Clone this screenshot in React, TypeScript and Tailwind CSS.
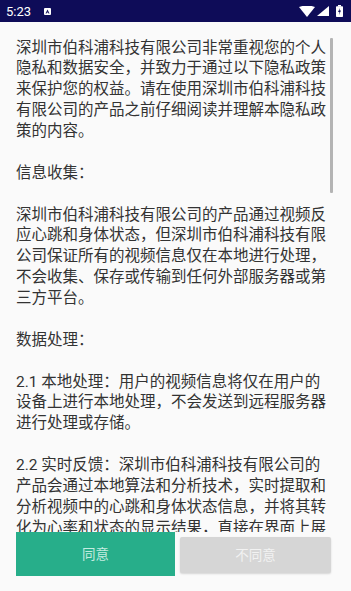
import React from "react";

const text = `深圳市伯科浦科技有限公司非常重视您的个人隐私和数据安全，并致力于通过以下隐私政策来保护您的权益。请在使用深圳市伯科浦科技有限公司的产品之前仔细阅读并理解本隐私政策的内容。

信息收集：

深圳市伯科浦科技有限公司的产品通过视频反应心跳和身体状态，但深圳市伯科浦科技有限公司保证所有的视频信息仅在本地进行处理，不会收集、保存或传输到任何外部服务器或第三方平台。

数据处理：

2.1 本地处理：用户的视频信息将仅在用户的设备上进行本地处理，不会发送到远程服务器进行处理或存储。

2.2 实时反馈：深圳市伯科浦科技有限公司的产品会通过本地算法和分析技术，实时提取和分析视频中的心跳和身体状态信息，并将其转化为心率和状态的显示结果，直接在界面上展示给用户。

数据安全：

深圳市伯科浦科技有限公司采取合理的安全措施保护用户的个人信息。`;

export default function App() {
  return (
    <div className="w-[351px] h-[591px] bg-[#fafafa] flex flex-col overflow-hidden">
      {/* status bar */}
      <div className="h-[22px] bg-[#0e0c58] flex items-center pl-[6px] pr-[8px] shrink-0">
        <span
          className="text-white text-[13px] leading-none"
          style={{ fontFamily: "Roboto, 'Noto Sans', sans-serif" }}
        >
          5:23
        </span>
        <span className="ml-[13px] w-[7px] h-[7px] bg-white rounded-[1px] flex items-center justify-center">
          <svg width="5" height="5" viewBox="0 0 10 10">
            <path d="M5 1 L9 9 H7 L6 7 H4 L3 9 H1 Z M4.6 5.5 H5.4 L5 4.5 Z" fill="#0e0c58" />
          </svg>
        </span>
        <div className="ml-auto flex items-center gap-[1px]">
          <svg width="16" height="11" viewBox="0 0 16 11">
            <path d="M0 1 Q8 -2 16 1 L8 11 Z" fill="white" />
          </svg>
          <svg width="12" height="10" viewBox="0 0 12 10" className="ml-[1px]">
            <path d="M12 0 V10 H0 Z" fill="white" />
          </svg>
          <svg width="7" height="12" viewBox="0 0 7 12" className="ml-[6px]">
            <rect x="2" y="0" width="3" height="1.5" fill="white" />
            <rect x="0" y="1.2" width="7" height="10.8" rx="0.8" fill="white" />
            <path d="M4 3 L2 7 H3.5 L3 10 L5 5.5 H3.6 Z" fill="#0e0c58" />
          </svg>
        </div>
      </div>

      {/* scroll content */}
      <div className="relative h-[510px] overflow-hidden shrink-0">
        <div
          className="pt-[15.6px] pl-[16px] w-[331px] text-[15.5px] leading-[20.87px] text-[#333333] whitespace-pre-wrap"
          style={{ fontFamily: "Roboto, 'Noto Sans CJK SC', sans-serif" }}
        >
          {text}
        </div>
        <div className="absolute left-[330px] top-[16px] w-[3px] h-[155px] bg-[#b4b4b4] rounded-[1px]" />
      </div>

      {/* buttons */}
      <div
        className="flex items-start pl-[16px] shrink-0"
        style={{ fontFamily: "Roboto, 'Noto Sans CJK SC', sans-serif" }}
      >
        <div className="w-[159px] h-[44px] bg-[#27ae8a] flex items-center justify-center text-[13.5px] text-[#c4ece0]">
          同意
        </div>
        <div className="ml-[5px] mt-[5px] w-[151px] h-[36px] bg-[#d6d6d6] rounded-[2px] shadow-[0_1px_2px_rgba(0,0,0,0.15)] flex items-center justify-center text-[13.5px] text-[#f2f2f2]">
          不同意
        </div>
      </div>
    </div>
  );
}
